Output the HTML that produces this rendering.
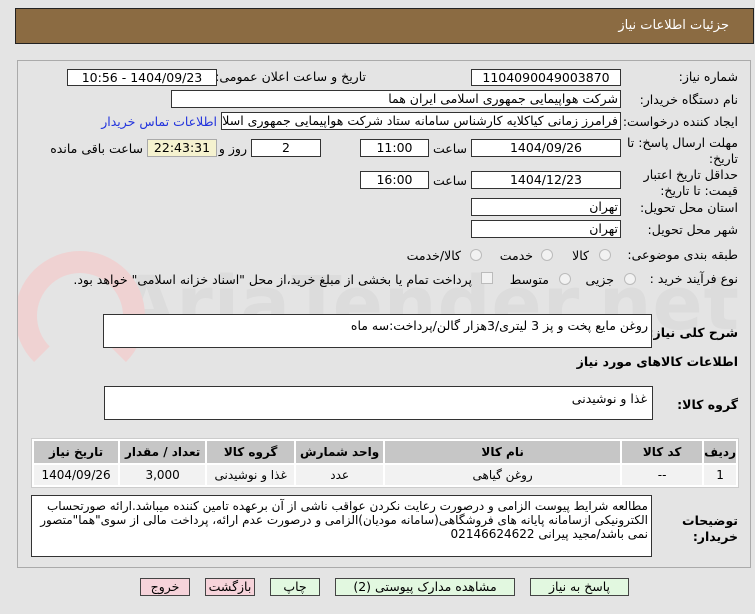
<!DOCTYPE html>
<html><head><meta charset="utf-8"><style>
*{margin:0;padding:0;box-sizing:border-box}
body{width:755px;height:614px;background:#e4e4e4;font-family:"DejaVu Sans","Liberation Sans",sans-serif;font-size:12px;color:#000;position:relative;overflow:hidden;direction:rtl}
.a{position:absolute;white-space:nowrap}
.in{position:absolute;background:#fff;border:1px solid #333;text-align:center;font-size:12.5px;line-height:15px;white-space:nowrap;overflow:hidden}
.l{position:absolute;white-space:nowrap;font-size:12.5px}
.r{position:absolute;width:12px;height:12px;border-radius:50%;border:1px solid #bbb;background:#f2f2f2}
.btn{position:absolute;border:1px solid #444;text-align:center;font-size:12.5px;line-height:16px;height:18px}
table{position:absolute;border-collapse:separate;border-spacing:2px;background:#fff;border:1px solid #ccc}
th{background:#c6c6c6;font-weight:bold;height:22px;font-size:12px}
td{background:#f2f2f2;height:20px;text-align:center;font-size:12px}
</style></head><body>
<div class="a" style="left:15px;top:8px;width:739px;height:36px;background:#8b6b42;border:1px solid #222"></div>
<div class="a" style="right:26px;top:18px;color:#fff;font-size:13px">جزئیات اطلاعات نیاز</div>
<div class="a" style="left:17px;top:60px;width:734px;height:508px;border:1px solid #aaa;background:#e4e4e4;overflow:hidden">
<div class="a" style="left:100px;top:200px;font-size:74px;font-weight:bold;color:#dcdcdc;direction:ltr;letter-spacing:1px">AriaTender.net</div>
<div class="a" style="left:-3px;top:190px;width:130px;height:130px;border:22px solid #efd2d2;border-radius:50%;border-bottom-color:transparent"></div>
</div>

<div class="l" style="right:17px;top:69px">شماره نیاز:</div>
<div class="in" style="left:471px;top:69px;width:150px;height:17px">1104090049003870</div>
<div class="l" style="right:389px;top:69px">تاریخ و ساعت اعلان عمومی:</div>
<div class="in" style="left:67px;top:69px;width:150px;height:17px">1404/09/23 - 10:56</div>

<div class="l" style="right:17px;top:92px">نام دستگاه خریدار:</div>
<div class="in" style="left:171px;top:90px;width:450px;height:18px;text-align:right;padding-right:2px">شرکت هواپیمایی جمهوری اسلامی ایران هما</div>

<div class="l" style="right:17px;top:114px">ایجاد کننده درخواست:</div>
<div class="in" style="left:221px;top:112px;width:400px;height:18px;text-align:right;padding-right:2px">فرامرز زمانی کیاکلایه کارشناس سامانه ستاد شرکت هواپیمایی جمهوری اسلامی</div>
<div class="l" style="right:538px;top:114px;color:#2233dd">اطلاعات تماس خریدار</div>

<div class="l" style="right:17px;top:135px;line-height:16px;text-align:right">مهلت ارسال پاسخ: تا<br>تاریخ:</div>
<div class="in" style="left:471px;top:139px;width:150px;height:18px">1404/09/26</div>
<div class="l" style="right:288px;top:141px">ساعت</div>
<div class="in" style="left:360px;top:139px;width:69px;height:18px">11:00</div>
<div class="in" style="left:251px;top:139px;width:70px;height:18px">2</div>
<div class="l" style="right:508px;top:141px">روز و</div>
<div class="in" style="left:147px;top:139px;width:70px;height:18px;background:#f5f2cf;border-color:#aaa">22:43:31</div>
<div class="l" style="right:612px;top:141px">ساعت باقی مانده</div>

<div class="l" style="right:17px;top:167px;line-height:16px;text-align:right">حداقل تاریخ اعتبار<br>قیمت: تا تاریخ:</div>
<div class="in" style="left:471px;top:171px;width:150px;height:18px">1404/12/23</div>
<div class="l" style="right:288px;top:173px">ساعت</div>
<div class="in" style="left:360px;top:171px;width:69px;height:18px">16:00</div>

<div class="l" style="right:17px;top:200px">استان محل تحویل:</div>
<div class="in" style="left:471px;top:198px;width:150px;height:18px;text-align:right;padding-right:2px">تهران</div>
<div class="l" style="right:17px;top:222px">شهر محل تحویل:</div>
<div class="in" style="left:471px;top:220px;width:150px;height:18px;text-align:right;padding-right:2px">تهران</div>

<div class="l" style="right:17px;top:247px">طبقه بندی موضوعی:</div>
<div class="r" style="left:599px;top:249px"></div><div class="l" style="right:166px;top:248px">کالا</div>
<div class="r" style="left:541px;top:249px"></div><div class="l" style="right:222px;top:248px">خدمت</div>
<div class="r" style="left:470px;top:249px"></div><div class="l" style="right:294px;top:248px">کالا/خدمت</div>

<div class="l" style="right:17px;top:271px">نوع فرآیند خرید :</div>
<div class="r" style="left:624px;top:273px"></div><div class="l" style="right:141px;top:272px">جزیی</div>
<div class="r" style="left:559px;top:273px"></div><div class="l" style="right:206px;top:272px">متوسط</div>
<div class="a" style="left:481px;top:272px;width:12px;height:12px;border:1px solid #bbb;background:#f2f2f2"></div>
<div class="l" style="right:283px;top:272px">پرداخت تمام یا بخشی از مبلغ خرید،از محل "اسناد خزانه اسلامی" خواهد بود.</div>

<div class="l" style="right:17px;top:325px;font-weight:bold">شرح کلی نیاز:</div>
<div class="in" style="left:103px;top:314px;width:549px;height:34px;text-align:right;padding-right:3px;padding-top:3px;background:#fff">روغن مایع پخت و پز 3 لیتری/3هزار گالن/پرداخت:سه ماه</div>
<div class="l" style="right:17px;top:354px;font-weight:bold">اطلاعات کالاهای مورد نیاز</div>
<div class="l" style="right:17px;top:397px;font-weight:bold">گروه کالا:</div>
<div class="in" style="left:104px;top:386px;width:549px;height:34px;text-align:right;padding-right:5px;padding-top:4px">غذا و نوشیدنی</div>

<table style="left:31px;top:438px;width:708px">
<tr><th style="width:28px">ردیف</th><th style="width:80px">کد کالا</th><th style="width:235px">نام کالا</th><th style="width:87px">واحد شمارش</th><th style="width:87px">گروه کالا</th><th style="width:85px">تعداد / مقدار</th><th>تاریخ نیاز</th></tr>
<tr><td>1</td><td>--</td><td>روغن گیاهی</td><td>عدد</td><td>غذا و نوشیدنی</td><td>3,000</td><td>1404/09/26</td></tr>
</table>

<div class="l" style="right:17px;top:513px;font-weight:bold;line-height:16px;text-align:right">توضیحات<br>خریدار:</div>
<div class="in" style="left:31px;top:495px;width:621px;height:62px;text-align:right;padding:3px 3px 0 0;white-space:normal;line-height:14px;font-size:12px">مطالعه شرایط پیوست الزامی و درصورت رعایت نکردن عواقب ناشی از آن برعهده تامین کننده میباشد.ارائه صورتحساب الکترونیکی ازسامانه پایانه های فروشگاهی(سامانه مودیان)الزامی و درصورت عدم ارائه، پرداخت مالی از سوی"هما"متصور نمی باشد/مجید پیرانی 02146624622</div>

<div class="btn" style="left:140px;top:578px;width:50px;background:#f6d3da">خروج</div>
<div class="btn" style="left:205px;top:578px;width:50px;background:#f6d3da">بازگشت</div>
<div class="btn" style="left:270px;top:578px;width:50px;background:#e2f8e0">چاپ</div>
<div class="btn" style="left:335px;top:578px;width:180px;background:#e2f8e0">مشاهده مدارک پیوستی (2)</div>
<div class="btn" style="left:530px;top:578px;width:99px;background:#e2f8e0">پاسخ به نیاز</div>
</body></html>
